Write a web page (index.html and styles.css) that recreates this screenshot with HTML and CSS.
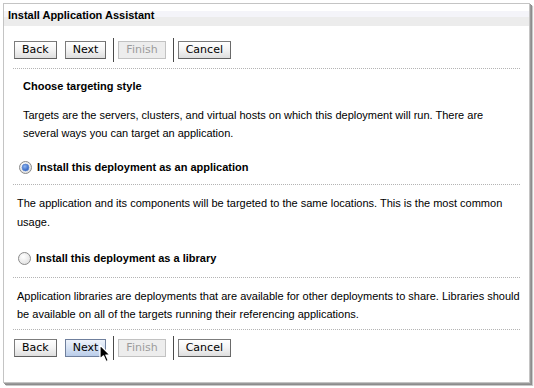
FILE: index.html
```html
<!DOCTYPE html>
<html>
<head>
<meta charset="utf-8">
<link rel="stylesheet" href="styles.css">
</head>
<body>
<div class="panel">
  <div class="header">Install Application Assistant</div>
  <div class="content">
    <div class="btnrow top">
      <button class="btn">Back</button>
      <button class="btn gap">Next</button>
      <span class="sep"></span>
      <button class="btn disabled">Finish</button>
      <span class="sep"></span>
      <button class="btn">Cancel</button>
    </div>
    <div class="rule"></div>
    <div class="intro">
      <div class="subtitle">Choose targeting style</div>
      <p class="para">Targets are the servers, clusters, and virtual hosts on which this deployment will run. There are several ways you can target an application.</p>
      <div class="radio-row first">
        <svg class="radio" width="13" height="13" viewBox="0 0 13 13">
          <defs>
            <radialGradient id="rg1" cx="40%" cy="35%" r="70%"><stop offset="0" stop-color="#ffffff"/><stop offset="1" stop-color="#dcdcdc"/></radialGradient>
            <radialGradient id="bl" cx="40%" cy="35%" r="65%"><stop offset="0" stop-color="#8fb6f0"/><stop offset="1" stop-color="#2c5fc0"/></radialGradient>
          </defs>
          <circle cx="6.5" cy="6.5" r="6" fill="url(#rg1)" stroke="#8a8a8a"/>
          <circle cx="6.5" cy="6.5" r="3.4" fill="url(#bl)" stroke="#5d86cf" stroke-width="0.8"/>
        </svg>
        <span class="label">Install this deployment as an application</span>
      </div>
    </div>
    <div class="rule"></div>
    <p class="para body tall">The application and its components will be targeted to the same locations. This is the most common usage.</p>
    <div class="radio-row second">
      <svg class="radio" width="13" height="13" viewBox="0 0 13 13">
        <defs>
          <radialGradient id="rg2" cx="40%" cy="35%" r="70%"><stop offset="0" stop-color="#ffffff"/><stop offset="1" stop-color="#e0e0e0"/></radialGradient>
        </defs>
        <circle cx="6.5" cy="6.5" r="6" fill="url(#rg2)" stroke="#8a8a8a"/>
      </svg>
      <span class="label">Install this deployment as a library</span>
    </div>
    <div class="rule"></div>
    <p class="para body last">Application libraries are deployments that are available for other deployments to share. Libraries should be available on all of the targets running their referencing applications.</p>
    <div class="rule"></div>
    <div class="btnrow bottom">
      <button class="btn">Back</button>
      <button class="btn gap hover">Next</button>
      <span class="sep"></span>
      <button class="btn disabled">Finish</button>
      <span class="sep"></span>
      <button class="btn">Cancel</button>
      <svg class="cursor" width="13" height="20" viewBox="0 0 13 20">
        <path d="M1 1 L1 15 L4.5 11.8 L7 17.5 L9.3 16.5 L6.8 11 L11 11 Z" fill="#000" stroke="#fff" stroke-width="1.2" stroke-linejoin="round"/>
      </svg>
    </div>
  </div>
</div>
</body>
</html>
```
FILE: styles.css
```css
html, body {
  margin: 0;
  padding: 0;
  background: #ffffff;
}
body {
  padding: 3px;
  font-family: "Liberation Sans", Arial, sans-serif;
  font-size: 11px;
  color: #000;
}
.panel {
  width: 525px;
  height: 378px;
  border: 1px solid #c4c4c4;
  background: #fff;
  box-shadow: 1px 1px 0 #9a9a9a, 2px 2px 0 #8c8c8c, 3px 3px 1px #c8c8c8;
  box-sizing: content-box;
}
.header {
  height: 22px;
  line-height: 22px;
  padding-left: 4px;
  font-weight: bold;
  background: linear-gradient(#ffffff 0, #ffffff 30%, #f4f4f9 32%, #f4f4f9 58%, #ececec 60%, #ececec 100%);
}
.content {
  padding: 0 9px 0 9px;
}
.btnrow {
  display: flex;
  align-items: center;
  height: 24px;
  padding-left: 1px;
  position: relative;
}
.btnrow.top {
  margin-top: 12px;
  margin-bottom: 6px;
}
.btnrow.bottom {
  margin-top: 6px;
}
.btn {
  font-family: "DejaVu Sans", sans-serif;
  font-size: 11px;
  height: 18px;
  line-height: 16px;
  padding: 0 7px;
  margin: 0;
  border: 1px solid #7c7c7c;
  border-bottom-color: #5e5e5e;
  border-right-color: #6a6a6a;
  border-radius: 0;
  background: linear-gradient(#ffffff, #f3f3f3 50%, #dedede);
  color: #000;
}
.btn.gap {
  margin-left: 8px;
}
.btn.hover {
  background: linear-gradient(#eef3fb, #d6e2f4 50%, #b9cce9);
  border-color: #6f7f9c;
}
.btn.disabled {
  background: #ededed;
  border-color: #c2c2c2;
  color: #9c9c9c;
}
.sep {
  width: 1px;
  height: 24px;
  background: #4a4a4a;
  margin: 0 4px 0 7px;
}
.rule {
  border-top: 1px dotted #b4b4b4;
  height: 0;
}
.intro {
  padding-left: 10px;
}
.subtitle {
  font-weight: bold;
  line-height: 18px;
  margin-top: 8px;
}
.para {
  margin: 0;
  line-height: 18px;
}
.intro .para {
  margin-top: 11px;
}
.para.body {
  margin-top: 9px;
  padding-left: 4px;
}
.para.tall {
  line-height: 19px;
}
.para.last {
  margin-bottom: 6px;
}
.radio-row {
  display: flex;
  align-items: center;
  height: 18px;
}
.radio-row.first {
  margin-top: 16px;
  margin-bottom: 8px;
  margin-left: -4px;
}
.radio-row.second {
  margin-top: 17px;
  margin-bottom: 10px;
  padding-left: 5px;
}
.radio {
  flex: none;
  display: block;
}
.label {
  font-weight: bold;
  margin-left: 5px;
}
.cursor {
  position: absolute;
  left: 86px;
  top: 8px;
}
```
